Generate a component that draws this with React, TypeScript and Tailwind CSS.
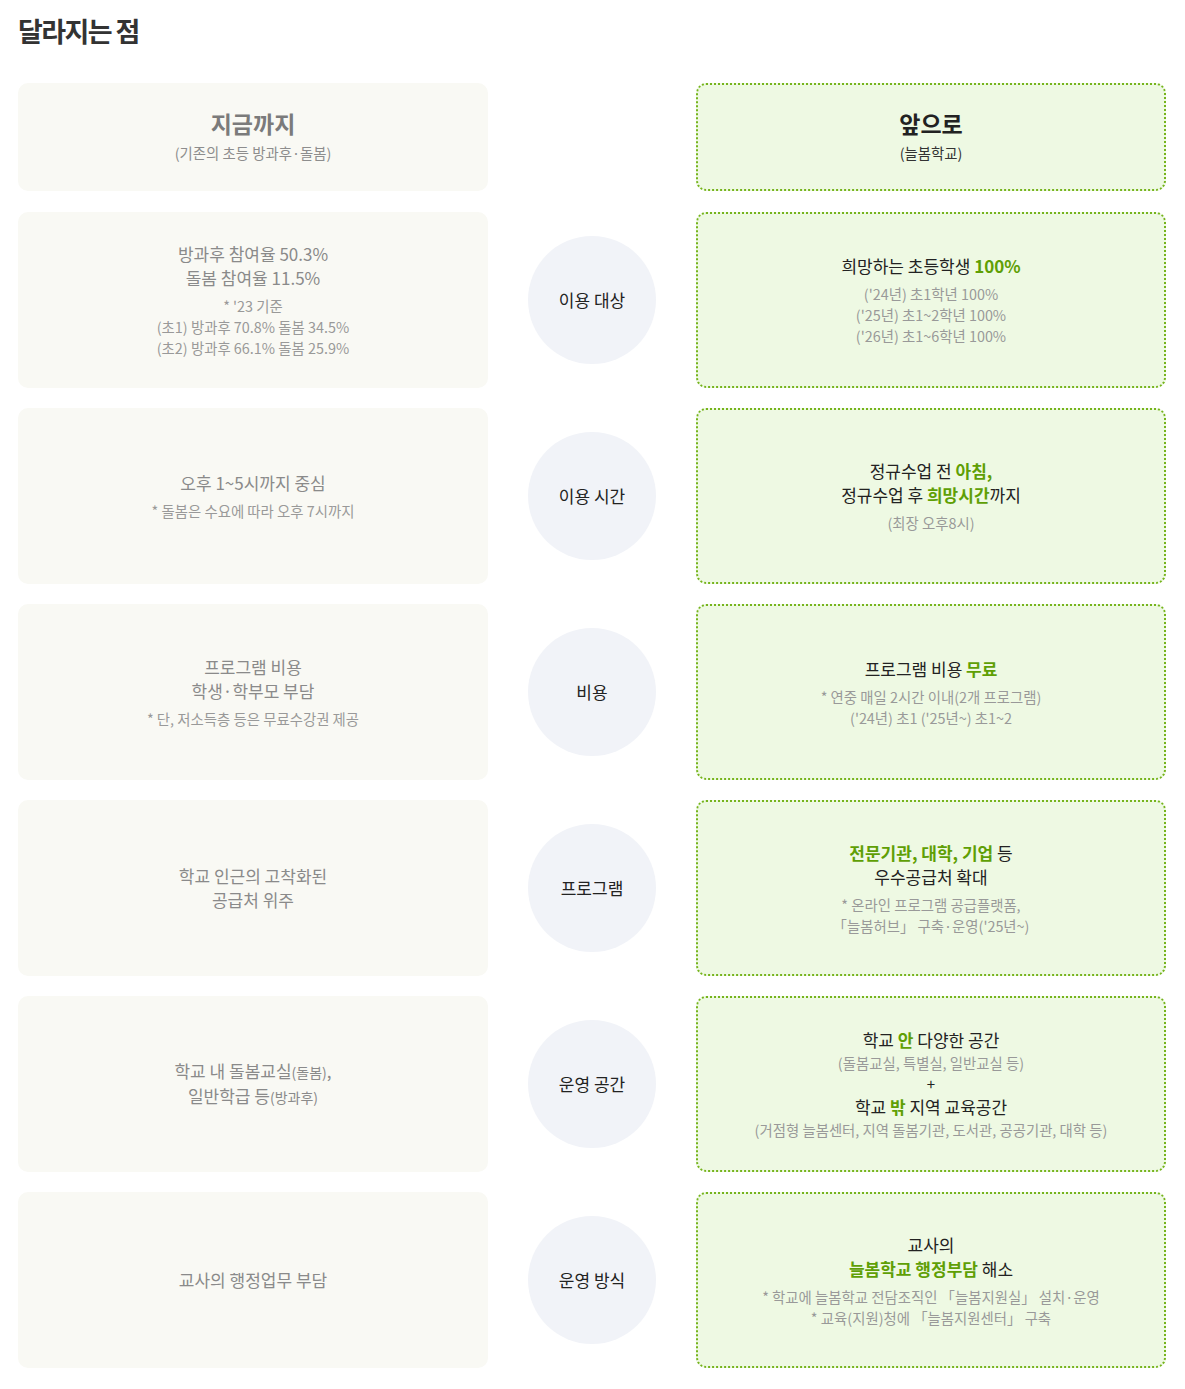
import React from 'react';

// 비교 행 데이터
type Row = {
  label: string;
  before: React.ReactNode;
  after: React.ReactNode;
};

const G = ({ children }: { children: React.ReactNode }) => (
  <b className="font-bold text-[#5f9f05]">{children}</b>
);

const Main = ({ children, dark }: { children: React.ReactNode; dark?: boolean }) => (
  <p className={`text-[17px] leading-[24px] ${dark ? 'text-[#222]' : 'text-[#8a8a8a]'}`}>{children}</p>
);

const Sub = ({ children }: { children: React.ReactNode }) => (
  <p className="text-[14.4px] leading-[21px] text-[#999]">{children}</p>
);

const rows: Row[] = [
  {
    label: '이용 대상',
    before: (
      <>
        <Main>방과후 참여율 50.3%<br />돌봄 참여율 11.5%</Main>
        <div className="mt-[5px]">
          <Sub>* '23 기준<br />(초1) 방과후 70.8% 돌봄 34.5%<br />(초2) 방과후 66.1% 돌봄 25.9%</Sub>
        </div>
      </>
    ),
    after: (
      <>
        <Main dark>희망하는 초등학생 <G>100%</G></Main>
        <div className="mt-[5px]">
          <Sub>('24년) 초1학년 100%<br />('25년) 초1~2학년 100%<br />('26년) 초1~6학년 100%</Sub>
        </div>
      </>
    ),
  },
  {
    label: '이용 시간',
    before: (
      <>
        <Main>오후 1~5시까지 중심</Main>
        <div className="mt-[5px]">
          <Sub>* 돌봄은 수요에 따라 오후 7시까지</Sub>
        </div>
      </>
    ),
    after: (
      <>
        <Main dark>정규수업 전 <G>아침,</G><br />정규수업 후 <G>희망시간</G>까지</Main>
        <div className="mt-[5px]">
          <Sub>(최장 오후8시)</Sub>
        </div>
      </>
    ),
  },
  {
    label: '비용',
    before: (
      <>
        <Main>프로그램 비용<br />학생·학부모 부담</Main>
        <div className="mt-[5px]">
          <Sub>* 단, 저소득층 등은 무료수강권 제공</Sub>
        </div>
      </>
    ),
    after: (
      <>
        <Main dark>프로그램 비용 <G>무료</G></Main>
        <div className="mt-[5px]">
          <Sub>* 연중 매일 2시간 이내(2개 프로그램)<br />('24년) 초1 ('25년~) 초1~2</Sub>
        </div>
      </>
    ),
  },
  {
    label: '프로그램',
    before: <Main>학교 인근의 고착화된<br />공급처 위주</Main>,
    after: (
      <>
        <Main dark><G>전문기관, 대학, 기업</G> 등<br />우수공급처 확대</Main>
        <div className="mt-[5px]">
          <Sub>* 온라인 프로그램 공급플랫폼,<br />「늘봄허브」 구축·운영('25년~)</Sub>
        </div>
      </>
    ),
  },
  {
    label: '운영 공간',
    before: (
      <Main>
        학교 내 돌봄교실<span className="text-[14px]">(돌봄)</span>,<br />
        일반학급 등<span className="text-[14px]">(방과후)</span>
      </Main>
    ),
    after: (
      <>
        <Main dark>학교 <G>안</G> 다양한 공간</Main>
        <Sub>(돌봄교실, 특별실, 일반교실 등)</Sub>
        <p className="text-[15px] leading-[22px] text-[#222]">+</p>
        <Main dark>학교 <G>밖</G> 지역 교육공간</Main>
        <Sub>(거점형 늘봄센터, 지역 돌봄기관, 도서관, 공공기관, 대학 등)</Sub>
      </>
    ),
  },
  {
    label: '운영 방식',
    before: <Main>교사의 행정업무 부담</Main>,
    after: (
      <>
        <Main dark>교사의<br /><G>늘봄학교 행정부담</G> 해소</Main>
        <div className="mt-[5px]">
          <Sub>* 학교에 늘봄학교 전담조직인 「늘봄지원실」 설치·운영<br />* 교육(지원)청에 「늘봄지원센터」 구축</Sub>
        </div>
      </>
    ),
  },
];

export default function App() {
  return (
    <div
      className="w-[1185px] min-h-[1389px] bg-white pl-[18px] pt-[12px]"
      style={{ fontFamily: '"Noto Sans CJK KR", "Noto Sans", sans-serif' }}
    >
      {/* 제목 */}
      <h2 className="text-[27px] font-bold leading-[38px] text-[#333] tracking-[-0.06em]">달라지는 점</h2>

      {/* 헤더 */}
      <div className="mt-[33px] grid grid-cols-[470px_208px_470px]">
        <div className="flex h-[108px] flex-col items-center justify-center rounded-[10px] bg-[#f9f9f4] pb-[4px]">
          <p className="text-[23px] font-bold leading-[32px] text-[#7b7b7b]">지금까지</p>
          <p className="mt-[4px] text-[14.4px] leading-[20px] text-[#8d8d8d]">(기존의 초등 방과후·돌봄)</p>
        </div>
        <div />
        <div className="flex h-[108px] flex-col items-center justify-center rounded-[10px] border-2 border-dotted border-[#76b41d] bg-[#eef9e3] pb-[4px]">
          <p className="text-[23px] font-bold leading-[32px] text-[#222]">앞으로</p>
          <p className="mt-[4px] text-[14.4px] leading-[20px] text-[#333]">(늘봄학교)</p>
        </div>
      </div>

      {/* 비교 행 */}
      <div className="mt-[21px] flex flex-col gap-[20px]">
        {rows.map((row) => (
          <div key={row.label} className="grid h-[176px] grid-cols-[470px_208px_470px]">
            <div className="flex flex-col items-center justify-center rounded-[10px] bg-[#f9f9f4] text-center">
              {row.before}
            </div>
            <div className="flex items-center justify-center">
              <div className="flex h-[128px] w-[128px] items-center justify-center rounded-full bg-[#f1f3f8] text-[17px] text-[#222]">
                {row.label}
              </div>
            </div>
            <div className="flex flex-col items-center justify-center rounded-[10px] border-2 border-dotted border-[#76b41d] bg-[#eef9e3] text-center">
              {row.after}
            </div>
          </div>
        ))}
      </div>
    </div>
  );
}
